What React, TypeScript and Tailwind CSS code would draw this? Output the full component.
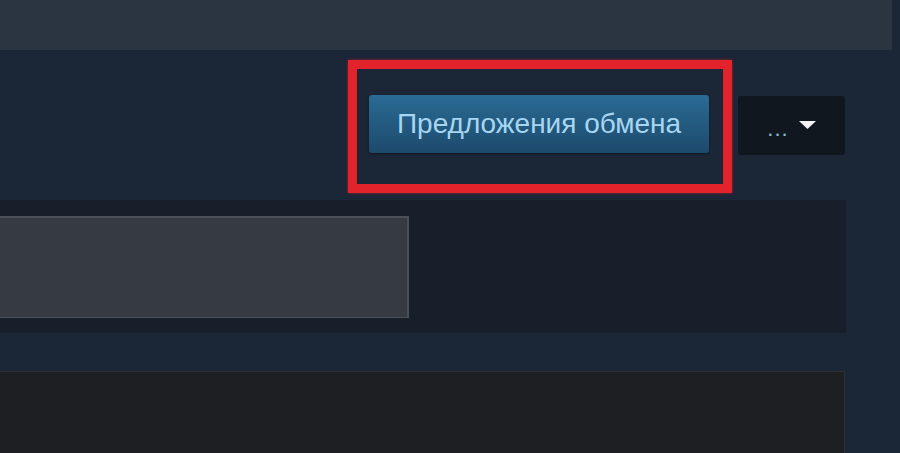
export default function App() {
  return (
    <div
      className="w-[900px] h-[453px] overflow-hidden bg-[#1b2636] flex flex-col"
      style={{ fontFamily: '"Liberation Sans", Arial, sans-serif' }}
    >
      {/* Top bar */}
      <div className="w-[892px] h-[50px] shrink-0 bg-[#2b3542]" />

      {/* Action row */}
      <div className="w-[845px] shrink-0 mt-[10px] flex justify-end items-start gap-[6px]">
        <div className="border-[9px] border-[#e3232b] pt-[26px] pb-[31px] pl-[12px] pr-[14px] shadow-[0_0_3px_rgba(227,35,43,.6)]">
          <button className="w-[340px] h-[58px] rounded-[3px] bg-gradient-to-b from-[#2a6b93] to-[#1d4a6d] text-[#a6d6f2] text-[28px] leading-none shadow-[0_1px_2px_rgba(0,0,0,.4)]">
            Предложения обмена
          </button>
        </div>
        <button className="mt-[36px] w-[107px] h-[59px] rounded-[3px] bg-[#10171f] flex items-center justify-center gap-[10px]">
          <span className="text-[#86bfce] text-[22px] leading-none tracking-[1px] mt-[6px]">...</span>
          <svg width="17" height="8" viewBox="0 0 17 8" className="mt-[-2px]">
            <path d="M0 0h17L8.5 8z" fill="#f2f4f6" />
          </svg>
        </button>
      </div>

      {/* Dark panel */}
      <div className="w-[846px] h-[133px] shrink-0 mt-[7px] bg-[#161f2a] pt-[16px]">
        <div className="w-[409px] h-[102px] bg-[#363a42] border-t-2 border-r-2 border-b border-[#4b5058]" />
      </div>

      {/* Bottom panel */}
      <div className="w-[845px] flex-1 mt-[38px] bg-[#1d1f23] border-t border-r border-[#2c3036]" />
    </div>
  );
}
